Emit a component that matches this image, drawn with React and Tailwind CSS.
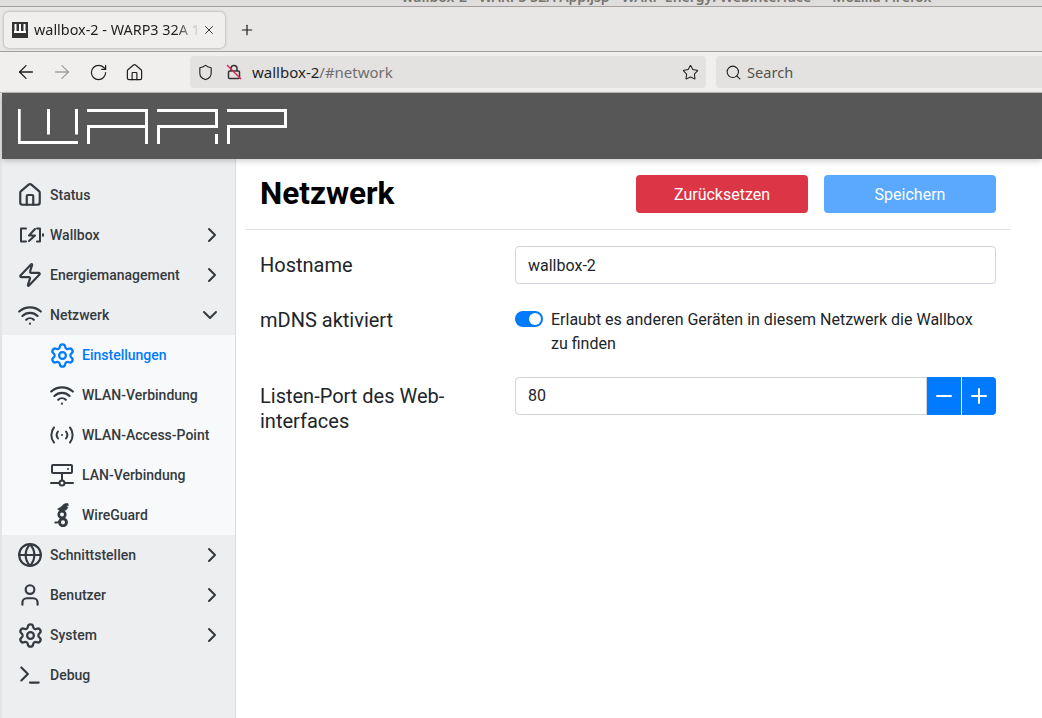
import {
  ArrowLeft,
  ArrowRight,
  ChevronDown,
  ChevronRight,
  Home,
  Minus,
  Plus,
  RotateCw,
  Search,
  Settings,
  Shield,
  Star,
  Terminal,
  User,
  Wifi,
  X,
  Zap,
  Globe,
} from 'lucide-react';

const ChargerIcon = () => (
  <svg className="shrink-0 overflow-visible" width="24" height="24" viewBox="0 0 24 24" fill="none" stroke="currentColor" strokeWidth="2" strokeLinecap="round" strokeLinejoin="round">
    <path d="M8 5.500H3v13h5" />
    <path d="M17 6l-6 6.500h6l-6 5.500" />
    <path d="M19 5.500h3v13h-3" />
    <path d="M25 11.300v1.400" />
  </svg>
);

const BroadcastIcon = () => (
  <svg className="shrink-0" width="24" height="24" viewBox="0 0 24 24" fill="none" stroke="currentColor" strokeWidth="2" strokeLinecap="round">
    <path d="M4 4.500c-3.500 4-3.500 11 0 15M20 4.500c3.500 4 3.500 11 0 15M8 8.500c-1.600 2-1.600 5 0 7M16 8.500c1.600 2 1.600 5 0 7" />
    <path d="M12 12h.01" />
  </svg>
);

const LanIcon = () => (
  <svg className="shrink-0" width="24" height="24" viewBox="0 0 24 24" fill="none" stroke="currentColor" strokeWidth="2" strokeLinecap="round" strokeLinejoin="round">
    <rect x="2" y="2" width="20" height="8" rx="1" />
    <path d="M18 6h.01M12 10v7M1 20h8M15 20h8" />
    <circle cx="12" cy="20" r="2.500" />
  </svg>
);

const WireGuardIcon = () => (
  <svg className="shrink-0" width="24" height="24" viewBox="0 0 24 24" fill="none" stroke="currentColor">
    <path d="M7.500 6c1.500-1 3-1.500 4.500-3 1.500-2 4-3 6-2.500l.5 2-2 .5 1.500 1.500c-1 2-3 3.500-6 4-2-.5-3.500-1.500-4.500-2.500z" fill="currentColor" strokeWidth="0.500" />
    <circle cx="12" cy="11.500" r="3.300" strokeWidth="2.600" />
    <circle cx="13" cy="19.300" r="3.500" strokeWidth="2.800" />
    <path d="M9.500 18.500c-1.500 1-3 1.300-5 .8" strokeWidth="1.800" />
  </svg>
);

const WarpLogo = () => (
  <svg width="270" height="36" viewBox="0 0 270 36" fill="none" stroke="#fff" strokeWidth="3">
    <path d="M1.200 0v33.500H60M30.500 0v25.500M58.500 0v25.500" />
    <path d="M69 1.500h61M128.500 1.500V35M70.500 35V17.500h58" />
    <path d="M139 1.500h61M198.500 1.500V19M140.500 35V17.500h58M198.500 25v10" />
    <path d="M209 1.500h60M267.500 1.500V19M210.500 35V17.500h58.500" />
  </svg>
);

const menuItems = [
  { label: 'Status', icon: <Home size={26} className="shrink-0" /> },
  { label: 'Wallbox', icon: <ChargerIcon />, arrow: 'right' },
  { label: 'Energiemanagement', icon: <Zap size={26} className="shrink-0" />, arrow: 'right' },
  {
    label: 'Netzwerk',
    icon: <Wifi size={26} className="shrink-0" />,
    arrow: 'down',
    children: [
      { label: 'Einstellungen', icon: <Settings size={27} className="shrink-0" />, active: true },
      { label: 'WLAN-Verbindung', icon: <Wifi size={26} className="shrink-0" /> },
      { label: 'WLAN-Access-Point', icon: <BroadcastIcon /> },
      { label: 'LAN-Verbindung', icon: <LanIcon /> },
      { label: 'WireGuard', icon: <WireGuardIcon /> },
    ],
  },
  { label: 'Schnittstellen', icon: <Globe size={26} className="shrink-0" />, arrow: 'right' },
  { label: 'Benutzer', icon: <User size={26} className="shrink-0" />, arrow: 'right' },
  { label: 'System', icon: <Settings size={27} className="shrink-0" />, arrow: 'right' },
  { label: 'Debug', icon: <Terminal size={26} className="shrink-0" /> },
];

const BrowserChrome = () => (
  <div className="font-['Noto_Sans',sans-serif] text-[#1f1f1f]">
    <div className="h-[7px] overflow-hidden bg-[#dfdedc] border-b border-[#a3a19e] text-center">
      <p className="-mt-[13px] pl-[291px] text-[14px] leading-[20px] font-semibold text-[#77756f] whitespace-nowrap">wallbox-2 - WARP3 32A App.jsp - WARP Energy: Webinterface — Mozilla Firefox</p>
    </div>
    <div className="h-[45px] bg-[#e8e7e5] border-b border-[#a3a19e] flex items-start pl-[4px] pt-[5px]">
      <div className="h-[36px] w-[221px] rounded-[5px] bg-[#f0efed] shadow-[0_0_3px_rgba(0,0,0,0.35)] flex items-center pl-[8px] pr-[9px]">
        <div className="w-[16px] h-[16px] bg-[#333] flex items-start justify-center pt-[2px] shrink-0">
          <svg width="12" height="10" viewBox="0 0 12 10" stroke="#fff" strokeWidth="2" fill="none">
            <path d="M0 8h12M1.500 0v8M6 0v8M10.500 0v8" />
          </svg>
        </div>
        <span className="ml-[6px] flex-1 overflow-hidden whitespace-nowrap text-[14.4px] bg-clip-text text-transparent bg-[linear-gradient(to_right,#1f1f1f_85%,transparent)]">wallbox-2 - WARP3 32A 11kW</span>
        <X size={14} strokeWidth={1.500} className="ml-[2px] shrink-0" />
      </div>
      <Plus size={16} strokeWidth={1.800} className="ml-[14px] mt-[10px]" />
    </div>
    <div className="h-[41px] bg-[#f0efed] border-b border-[#bdbbb7] flex items-center pl-[15px]">
      <ArrowLeft size={22} strokeWidth={1.400} className="shrink-0" />
      <ArrowRight size={22} strokeWidth={1.400} className="ml-[14px] shrink-0 text-[#a2a19f]" />
      <RotateCw size={19} strokeWidth={1.500} className="ml-[16px] shrink-0" />
      <Home size={19} strokeWidth={1.500} className="ml-[17px] shrink-0" />
      <div className="ml-[46px] h-[32px] w-[516px] shrink-0 rounded-[4px] bg-[#e3e2e0] flex items-center pl-[7px] pr-[7px]">
        <Shield size={17} strokeWidth={1.600} className="shrink-0" />
        <div className="relative ml-[12px] shrink-0">
          <svg width="16" height="16" viewBox="0 0 16 16" fill="none" stroke="#333" strokeWidth="1.500">
            <rect x="2.500" y="7" width="11" height="7.500" rx="1" />
            <path d="M5 7V4.500a3 3 0 0 1 6 0V7" />
          </svg>
          <svg className="absolute left-0 top-0" width="16" height="16" viewBox="0 0 16 16" stroke="#e22850" strokeWidth="1.500">
            <path d="M1 1l14 14" />
          </svg>
        </div>
        <span className="ml-[10px] text-[15px]">wallbox-2<span className="text-[#6f6e6c]">/#network</span></span>
        <Star size={17} strokeWidth={1.500} className="ml-auto" />
      </div>
      <div className="ml-[10px] h-[32px] flex-1 rounded-l-[4px] bg-[#e3e2e0] flex items-center pl-[9px]">
        <Search size={17} strokeWidth={1.500} className="shrink-0" />
        <span className="ml-[5px] mt-[1px] text-[14.6px] text-[#55534f]">Search</span>
      </div>
    </div>
  </div>
);

const MenuRow = ({ item, child }) => (
  <div className={`h-[40px] flex items-center ${child ? 'pl-[48px]' : 'pl-[16px]'} ${item.arrow === 'down' ? 'pr-[13px]' : 'pr-[11px]'} ${item.active ? 'text-[#007bff]' : 'text-[#343a40]'}`}>
    <span className="w-[24px] h-[24px] flex items-center justify-center shrink-0">{item.icon}</span>
    <span className="ml-[8px] text-[14px] font-medium">{item.label}</span>
    {item.arrow === 'right' && <ChevronRight size={24} strokeWidth={2} className="ml-auto text-[#343a40]" />}
    {item.arrow === 'down' && <ChevronDown size={24} strokeWidth={2} className="ml-auto text-[#343a40]" />}
  </div>
);

const Sidebar = () => (
  <nav className="w-[234px] shrink-0 bg-[#edeef0] border-r border-[#dcdcdc] pt-[16px]">
    {menuItems.map((item) => (
      <div key={item.label}>
        <MenuRow item={item} />
        {item.children && (
          <div className="bg-[#f8f9fa]">
            {item.children.map((child) => (
              <MenuRow key={child.label} item={child} child />
            ))}
          </div>
        )}
      </div>
    ))}
  </nav>
);

const App = () => (
  <div className="h-[718px] w-[1042px] overflow-hidden bg-white flex flex-col font-['Roboto',sans-serif]">
    <BrowserChrome />
    <div className="flex-1 flex flex-col pl-[2px] bg-[#e4e4e4] min-h-0">
      <header className="h-[66px] shrink-0 bg-[#575757] pl-[16px] pt-[16px] relative z-10 shadow-[0_2px_6px_rgba(0,0,0,0.2)]">
        <WarpLogo />
      </header>
      <div className="flex-1 flex min-h-0">
        <Sidebar />
        <main className="flex-1 bg-white pl-[9px] pr-[31px] text-[#212529]">
          <div className="flex items-center h-[71px] border-b border-[#dee2e6] px-[15px]">
            <h1 className="text-[31.5px] font-bold text-black flex-1 -mt-[1px]">Netzwerk</h1>
            <button className="h-[38px] w-[172px] rounded-[4px] bg-[#dc3545] pt-[1px] text-white text-[16px]">Zurücksetzen</button>
            <button className="ml-[16px] h-[38px] w-[172px] rounded-[4px] bg-[#5aa9fe] pt-[1px] text-white text-[16px]">Speichern</button>
          </div>
          <div className="mt-[16px] px-[15px] flex flex-col">
            <div className="flex items-start">
              <label className="w-[255px] shrink-0 text-[20px] leading-[38px]">Hostname</label>
              <input
                readOnly
                value="wallbox-2"
                className="flex-1 h-[38px] rounded-[4px] border border-[#ced4da] px-[12px] text-[16px] outline-none"
              />
            </div>
            <div className="mt-[24px] flex items-start">
              <label className="w-[255px] shrink-0 text-[20px] leading-[24px]">mDNS aktiviert</label>
              <div className="flex-1 flex items-start text-[16px] leading-[24px] pr-[20px]">
                <div className="mt-[3px] h-[16px] w-[28px] shrink-0 rounded-full bg-[#007bff] flex items-center justify-end pr-[2px]">
                  <div className="h-[12px] w-[12px] rounded-full bg-white" />
                </div>
                <p className="ml-[8px]">Erlaubt es anderen Geräten in diesem Netzwerk die Wallbox zu finden</p>
              </div>
            </div>
            <div className="mt-[21px] flex items-start">
              <label className="w-[255px] shrink-0 pr-[40px] text-[20px] leading-[25px] mt-[7px]">Listen-Port des Web-interfaces</label>
              <div className="flex-1 flex h-[38px]">
                <input
                  readOnly
                  value="80"
                  className="flex-1 min-w-0 rounded-l-[4px] border border-[#ced4da] px-[12px] text-[16px] outline-none"
                />
                <button className="w-[34px] bg-[#007bff] text-white flex items-center justify-center">
                  <Minus size={24} strokeWidth={2} />
                </button>
                <button className="ml-[1px] w-[34px] rounded-r-[4px] bg-[#007bff] text-white flex items-center justify-center">
                  <Plus size={24} strokeWidth={2} />
                </button>
              </div>
            </div>
          </div>
        </main>
      </div>
    </div>
  </div>
);

export default App;
